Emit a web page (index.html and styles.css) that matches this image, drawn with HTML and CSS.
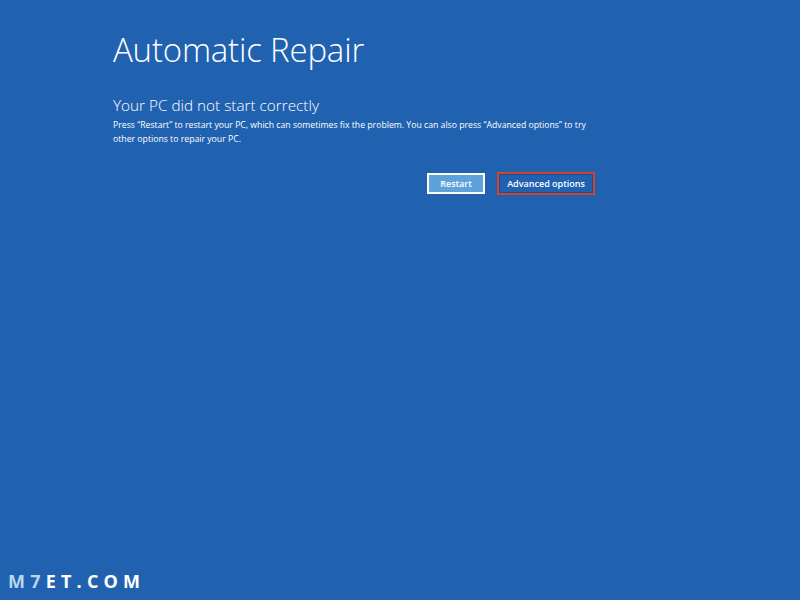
FILE: index.html
```html
<!DOCTYPE html>
<html lang="en">
<head>
  <meta charset="UTF-8">
  <title>Automatic Repair</title>
  <link rel="stylesheet" href="styles.css">
</head>
<body>
  <div class="screen" role="main">
    <div class="repair">
      <h1>Automatic Repair</h1>
      <h2>Your PC did not start correctly</h2>
      <p>Press “Restart” to restart your PC, which can sometimes fix the problem. You can also press “Advanced options” to try other options to repair your PC.</p>
      <div class="actions">
        <button class="btn btn-restart">Restart</button>
        <button class="btn btn-advanced">Advanced options</button>
      </div>
    </div>
    <div class="watermark"><span class="mark-light">M7</span>ET.COM</div>
  </div>
</body>
</html>
```

FILE: styles.css
```css
:root {
  --bg-color: #2162b0;
  --btn-fill: #5ea2dc;
  --mark-red: #d0442c;
}

* {
  margin: 0;
  padding: 0;
  box-sizing: border-box;
}

body {
  background: var(--bg-color);
  color: #fff;
  font-family: 'Open Sans', 'Noto Sans', sans-serif;
  width: 800px;
  height: 600px;
  overflow: hidden;
}

.screen {
  height: 600px;
  display: flex;
  flex-direction: column;
  justify-content: space-between;
}

.repair {
  width: 482px;
  margin-left: 113px;
  padding-top: 28px;
}

.repair h1 {
  font-weight: 300;
  font-size: 33px;
  line-height: 44px;
  letter-spacing: -0.2px;
}

.repair h2 {
  font-weight: 300;
  font-size: 15.3px;
  line-height: 20px;
  margin-top: 23px;
}

.repair p {
  font-size: 8.7px;
  line-height: 14px;
  margin-top: 3px;
}

.actions {
  display: flex;
  justify-content: flex-end;
  gap: 12px;
  margin-top: 26px;
}

.btn {
  font-family: 'Open Sans', sans-serif;
  font-weight: 600;
  font-size: 9px;
  color: #fff;
  height: 21px;
  border: none;
  background: none;
}

.btn-restart {
  width: 58px;
  background: var(--btn-fill);
  border: 2px solid #fff;
  margin-top: 1px;
}

.btn-advanced {
  width: 98px;
  height: 23px;
  border: 2px solid var(--mark-red);
  box-shadow: inset 0 0 0 1px #1c4f96;
}

.watermark {
  margin: 0 0 8px 8px;
  font-family: 'Open Sans', sans-serif;
  font-weight: 700;
  font-size: 18px;
  letter-spacing: 5.2px;
  color: #fff;
  line-height: 22px;
}

.mark-light {
  color: #b7d6f2;
}
```
